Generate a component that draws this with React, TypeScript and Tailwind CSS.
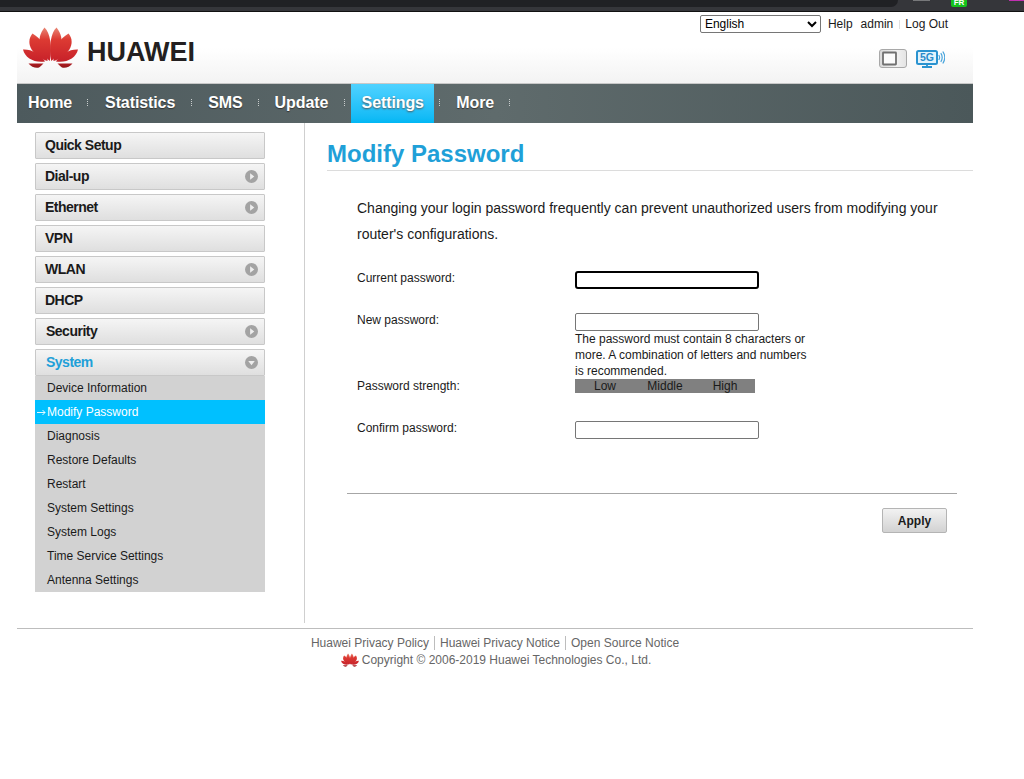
import React from "react";

const Flower = ({ className }: { className: string }) => {
  const left = [
    "M26.800 34 C17 26 12 12 21.500 0.500 C27 5 29.500 20 26.800 34 Z",
    "M24.500 34 C11 30 1 17 9.500 6.500 C17 11 26 20 24.500 34 Z",
    "M22 34.500 C11 36 2 31 0 22.500 C8 22 18 27 22 34.500 Z",
    "M20.500 36.500 L5.500 36.500 C8 40 13 41.500 16 40.500 C18 39 19 38 20.500 36.500 Z",
  ];
  return (
    <svg viewBox="0 0 55 41" className={className}>
      <defs>
        <linearGradient id="pg" x1="0" y1="0" x2="0" y2="41" gradientUnits="userSpaceOnUse">
          <stop offset="0" stopColor="#e98a78" />
          <stop offset="0.3" stopColor="#dd3b33" />
          <stop offset="0.8" stopColor="#c9232a" />
          <stop offset="1" stopColor="#8e1518" />
        </linearGradient>
      </defs>
      {left.map((d, i) => <path key={i} d={d} fill="url(#pg)" />)}
      <g transform="translate(55 0) scale(-1 1)">
        {left.map((d, i) => <path key={i} d={d} fill="url(#pg)" />)}
      </g>
    </svg>
  );
};

const items = [
  ["Quick Setup", false], ["Dial-up", true], ["Ethernet", true], ["VPN", false],
  ["WLAN", true], ["DHCP", false], ["Security", true],
] as const;
const subs = ["Device Information", "Modify Password", "Diagnosis", "Restore Defaults", "Restart", "System Settings", "System Logs", "Time Service Settings", "Antenna Settings"];

const Dots = () => (
  <span className="flex h-[7px] w-[1px] flex-col justify-between">
    {[0, 1, 2, 3].map((i) => <span key={i} className="h-[1px] w-[1px] bg-[#c9cdcd]" />)}
  </span>
);

const Circle = ({ down }: { down?: boolean }) => (
  <svg viewBox="0 0 14 14" className="h-[13px] w-[13px]">
    <circle cx="7" cy="7" r="7" fill="#a3a3a3" />
    {down ? <path d="M3.500 5.500h7L7 10z" fill="#eee" /> : <path d="M5.500 3.500v7L10 7z" fill="#eee" />}
  </svg>
);

const navItem = "flex items-center [text-shadow:0_1px_1px_#333]";
const menuRow = "flex h-[27px] items-center justify-between rounded-[1px] border border-[#c8c8c8] bg-gradient-to-b from-[#f5f5f5] to-[#dfdfdf] pr-[6px] text-[14px] font-bold tracking-[-0.5px]";
const rowLabel = "w-[218px] shrink-0";
const inputCls = "block h-[18px] w-[184px] rounded-[2px] border border-[#767676] bg-white";

export default function App() {
  return (
    <div className="min-h-[779px] bg-white font-['Liberation_Sans',Arial,sans-serif] text-[12px] text-[#1a1a1a]">
      <div className="relative h-[12px] border-b border-[#111] bg-[#35363a]">
        <div className="h-[7px] w-[898px] rounded-br-[8px] bg-[#202124]" />
        <span className="absolute left-[913px] top-0 h-[1px] w-[17px] bg-[#77787a]" />
        <span className="absolute left-[951px] top-0 h-[7px] w-[16px] rounded-b-[2px] bg-[#14c21c] text-center text-[8px] font-bold leading-[6px] text-white">FR</span>
        <span className="absolute left-[1009px] top-0 h-[1px] w-[15px] bg-[#c030b0]" />
      </div>

      <div className="mx-[17px] w-[956px]">
        <header className="relative flex h-[71px] items-start justify-between bg-gradient-to-b from-white via-white to-[#f3f3f3] pl-[6px]">
          <div className="mt-[15px] flex items-center">
            <Flower className="h-[41px] w-[55px]" />
            <span className="ml-[9px] mt-[10px] text-[27px] font-bold leading-none text-[#231f20]">HUAWEI</span>
          </div>
          <div className="flex flex-col items-end">
            <div className="mr-[25px] mt-[3px] flex h-[18px] items-center">
              <select className="h-[18px] w-[121px] rounded-[2px] border border-[#767676] bg-white text-[12px] text-black" defaultValue="English">
                <option>English</option>
              </select>
              <span className="ml-[7px]">Help</span>
              <span className="ml-[8px]">admin</span>
              <span className="ml-[6px] mr-[5px] flex"><span className="h-[9px] w-px bg-[#e0e0e0]" /></span>
              <span>Log Out</span>
            </div>
            <div className="mr-[28px] mt-[16px] flex items-center gap-[9px]">
              <svg viewBox="0 0 28 19" className="h-[19px] w-[28px]">
                <defs>
                  <linearGradient id="dev" x1="0" y1="0" x2="1" y2="0">
                    <stop offset="0" stopColor="#d8d8d8" />
                    <stop offset="0.6" stopColor="#f2f2f2" />
                    <stop offset="1" stopColor="#e4e4e4" />
                  </linearGradient>
                </defs>
                <rect x="0.5" y="0.500" width="27" height="18" rx="2.500" fill="url(#dev)" stroke="#a8a8a8" />
                <rect x="4" y="3.500" width="13" height="12" rx="0.500" fill="#fbfbfb" stroke="#707070" strokeWidth="1.800" />
              </svg>
              <svg viewBox="0 0 29 18" className="h-[18px] w-[29px]">
                <rect x="1" y="1" width="20" height="13" rx="1.500" fill="#e3f3fc" stroke="#2a93d0" strokeWidth="2" />
                <path d="M6 17h10M11 14v3" stroke="#2a93d0" strokeWidth="1.800" />
                <text x="11" y="11.200" textAnchor="middle" fontSize="10.500" fontWeight="700" fill="#2a8ccb" fontFamily="Liberation Sans">5G</text>
                <path d="M22.800 5q1.600 2.500 0 5M24.800 3.200q2.800 4.300 0 8.600M26.800 1.500q4 6 0 12" fill="none" stroke="#4aa5dc" strokeWidth="1.200" />
              </svg>
            </div>
          </div>
        </header>

        <nav className="flex h-[40px] items-stretch border-t border-[#c8c8c8] bg-gradient-to-r from-[#4d5a5d] via-[#5f6b6c] to-[#4b585a] pb-[2px] pl-[11px] text-[16px] font-bold tracking-[-0.1px] text-white">
          <span className={navItem}>Home</span>
          <span className="ml-[15px] mr-[17px] flex items-center"><Dots /></span>
          <span className={navItem}>Statistics</span>
          <span className="mx-[16px] flex items-center"><Dots /></span>
          <span className={navItem}>SMS</span>
          <span className="ml-[15px] mr-[16px] flex items-center"><Dots /></span>
          <span className={navItem}>Update</span>
          <span className="mx-[16px] flex items-center"><Dots /></span>
          <span className="-mb-[2px] ml-[-10px] flex w-[83px] items-center justify-center bg-gradient-to-b from-[#4fd2ff] via-[#2cc5fb] to-[#00b7f4] pb-[2px] [text-shadow:0_1px_2px_#555]">Settings</span>
          <span className="ml-[5px] mr-[16px] flex items-center"><Dots /></span>
          <span className={navItem}>More</span>
          <span className="ml-[15px] flex items-center"><Dots /></span>
        </nav>

        <main className="flex">
          <aside className="w-[287px] shrink-0 pb-[31px] pl-[18px] pt-[9px]">
            <div className="w-[230px]">
              {items.map(([t, arrow]) => (
                <div key={t} className={`mb-[4px] ${menuRow} ${t === "Security" ? "pl-[10px]" : "pl-[9px]"}`}>
                  <span>{t}</span>
                  {arrow && <Circle />}
                </div>
              ))}
              <div className={`${menuRow} pl-[10px] text-[#1fa0d8]`}>
                <span>System</span>
                <Circle down />
              </div>
              <div className="bg-[#d2d2d2]">
                {subs.map((s) =>
                  s === "Modify Password" ? (
                    <div key={s} className="relative flex h-[24px] items-center bg-[#00c0ff] pl-[12px] text-white">
                      <svg viewBox="0 0 9 7" className="absolute left-[2px] top-[9px] h-[7px] w-[9px]">
                        <path d="M0 3.500h8M5.500 1l2.500 2.500L5.500 6" fill="none" stroke="#fff" strokeWidth="0.900" />
                      </svg>
                      {s}
                    </div>
                  ) : (
                    <div key={s} className="flex h-[24px] items-center pl-[12px]">{s}</div>
                  )
                )}
              </div>
            </div>
          </aside>

          <section className="min-w-0 flex-1 border-l border-[#cfcfcf] pl-[22px] pt-[9px]">
            <h1 className="h-[39px] border-b border-[#dcdcdc] text-[24px] font-bold leading-[44px] text-[#1fa0d8]">Modify Password</h1>
            <p className="ml-[30px] mt-[24px] w-[590px] text-[14px] leading-[26px]">
              Changing your login password frequently can prevent unauthorized users from modifying your router's configurations.
            </p>

            <div className="ml-[30px] mt-[22px]">
              <div className="flex h-[42px]">
                <div className={rowLabel}>Current password:</div>
                <input type="password" className="mt-[2px] block h-[18px] w-[184px] rounded-[3px] border-2 border-black bg-white" />
              </div>
              <div className="flex">
                <div className={rowLabel}>New password:</div>
                <div className="mt-[2px] w-[235px]">
                  <input type="password" className={inputCls} />
                  <div className="leading-[16px]">The password must contain 8 characters or more. A combination of letters and numbers is recommended.</div>
                </div>
              </div>
              <div className="flex h-[42px]">
                <div className={`${rowLabel} -mt-[2px]`}>Password strength:</div>
                <div className="flex h-[14px] w-[180px] items-center bg-[#808080] leading-[14px]">
                  <span className="w-[60px] text-center">Low</span>
                  <span className="w-[60px] text-center">Middle</span>
                  <span className="w-[60px] text-center">High</span>
                </div>
              </div>
              <div className="flex">
                <div className={`${rowLabel} -mt-[2px]`}>Confirm password:</div>
                <input type="password" className={inputCls} />
              </div>
            </div>

            <div className="ml-[20px] mt-[54px] w-[610px] border-t border-[#a6a6a6] pr-[10px] pt-[14px]">
              <div className="flex justify-end">
                <button className="h-[25px] w-[65px] rounded-[2px] border border-[#b4b4b4] bg-gradient-to-b from-[#f2f2f2] to-[#d2d2d2] font-bold">Apply</button>
              </div>
            </div>
          </section>
        </main>

        <footer className="mt-[5px] border-t border-[#bdbdbd] pt-[6px] text-[#666]">
          <div className="flex h-[16px] items-center justify-center">
            <span>Huawei Privacy Policy</span>
            <span className="mx-[5px] h-[14px] w-px bg-[#bdbdbd]" />
            <span>Huawei Privacy Notice</span>
            <span className="mx-[5px] h-[14px] w-px bg-[#bdbdbd]" />
            <span>Open Source Notice</span>
          </div>
          <div className="mt-[1px] flex h-[16px] items-center justify-center pl-[2px]">
            <Flower className="mr-[3px] h-[14px] w-[18px]" />
            <span>Copyright © 2006-2019 Huawei Technologies Co., Ltd.</span>
          </div>
        </footer>
      </div>
    </div>
  );
}
